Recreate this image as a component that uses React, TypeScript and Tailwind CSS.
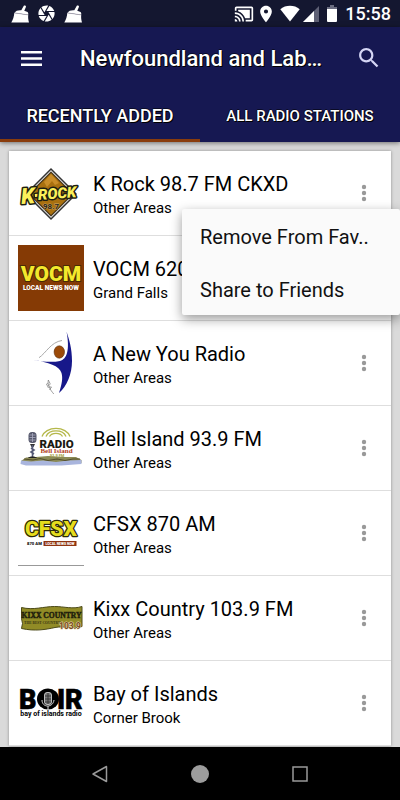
import React, { useState } from "react";

const outline =
  "[text-shadow:1px_1px_0_#000,-1px_0_0_#0008,0_-1px_0_#0008]";

function Broom() {
  return (
    <svg width="18" height="18" viewBox="0 0 18 18" fill="#fff">
      <path d="M12.800.7c.8-.8 2.600 0 2.100 1.300L13.300 5.800l2.600 1c1.200.5 1.600 1.500 1.300 2.900L3.500 7.700C4.800 5.700 7 5 10.300 5.200z" />
      <path d="M3.300 8.100l13.900 2c-.2 2.600 0 4.800.8 7.300H.3C2.100 15 3 11.600 3.300 8.100z" />
      <path d="M3.500 7.900l13.600 2" stroke="#a9a4b4" strokeWidth=".6" />
    </svg>
  );
}

function Aperture() {
  return (
    <svg width="17" height="17" viewBox="1.500 1.500 21 21" fill="#fff">
      <path d="M9.400 10.500l4.770-8.260C13.470 2.090 12.750 2 12 2c-2.400 0-4.600.85-6.320 2.250l3.660 6.350.060-.1zM21.540 9c-.92-2.920-3.150-5.260-6-6.340L11.880 9h9.660zm.26 1h-7.490l.29.500 4.760 8.250C21 16.970 22 14.610 22 12c0-.69-.07-1.350-.2-2zM8.540 12l-3.900-6.750C3.010 7.030 2 9.390 2 12c0 .69.070 1.350.2 2h7.490l-1.150-2zm-6.080 3c.92 2.920 3.150 5.260 6 6.340L12.120 15H2.460zm11.270 0l-3.900 6.760c.7.150 1.420.24 2.170.24 2.400 0 4.600-.85 6.320-2.250l-3.660-6.350-.93 1.600z" />
    </svg>
  );
}

function StatusBar() {
  return (
    <div className="flex h-[27px] items-center justify-between bg-[#141730] pr-[9px] pl-[11px]">
      <div className="flex items-center gap-[9px]">
        <Broom />
        <Aperture />
        <Broom />
      </div>
      <div className="flex items-center">
        <svg width="20" height="20" viewBox="0 0 24 24" fill="#fff">
          <path d="M1 18v3h3c0-1.660-1.340-3-3-3zm0-4v2c2.760 0 5 2.240 5 5h2c0-3.870-3.130-7-7-7zm18-7H5v1.630c3.960 1.280 7.090 4.410 8.370 8.370H19V7zM1 10v2c4.970 0 9 4.030 9 9h2c0-6.080-4.930-11-11-11zm20-7H3c-1.100 0-2 .9-2 2v3h2V5h18v14h-7v2h7c1.100 0 2-.9 2-2V5c0-1.100-.9-2-2-2z" />
        </svg>
        <svg className="ml-0.5" width="20" height="20" viewBox="0 0 24 24" fill="#fff">
          <path d="M12 2C8.130 2 5 5.130 5 9c0 5.250 7 13 7 13s7-7.750 7-13c0-3.870-3.130-7-7-7zm0 9.500a2.500 2.500 0 0 1 0-5 2.500 2.500 0 0 1 0 5z" />
        </svg>
        <svg className="ml-1" width="20" height="17" viewBox="0 0 20 17" fill="#fff">
          <path d="M10 16.500L.3 4.200C5.500-.3 14.500-.3 19.700 4.200z" />
        </svg>
        <svg className="ml-[3px]" width="16" height="16" viewBox="0 0 16 16">
          <path d="M16 0v16H0z" fill="#5e6075" />
          <path d="M11 5v11H0z" fill="#fff" />
        </svg>
        <svg className="ml-2" width="10" height="17" viewBox="0 0 10 17">
          <path d="M3 0h4v2h3v3H0V2h3z" fill="#6b6d80" />
          <path d="M0 4h10v12a1 1 0 0 1-1 1H1a1 1 0 0 1-1-1z" fill="#fff" />
        </svg>
        <span className="ml-2 text-[18px] leading-[27px] font-medium text-white">
          15:58
        </span>
      </div>
    </div>
  );
}

function KRockLogo() {
  return (
    <svg width="66" height="66" viewBox="0 0 66 66">
      <path d="M33 8l26 26-26 26L7 34z" fill="#333" />
      <path d="M33 10l24 24-24 24L9 34z" fill="#ddd" />
      <path d="M33 11.500l22.500 22.500L33 56.500 10.500 34z" fill="#3a2a10" />
      <path d="M33 13l21 21-21 21-21-21z" fill="#a9700f" />
      <path d="M33 14l8 9-4 2-3-4-5 6-3-5z" fill="#c98d28" />
      <g
        transform="rotate(-4 33 36)"
        fontFamily="Roboto"
        fontWeight="900"
        fontStyle="italic"
        fill="#fbf05a"
        stroke="#1d1d12"
        strokeWidth="3"
        strokeLinejoin="round"
        paintOrder="stroke"
      >
        <text x="3" y="42" fontSize="22">K</text>
        <path d="M17 33h4v3h-4z" />
        <text x="20" y="39" fontSize="15">ROCK</text>
      </g>
      <text x="25" y="49" fontFamily="Roboto" fontWeight="700" fontSize="8" fill="#2a2418" stroke="#c9a869" strokeWidth=".8" paintOrder="stroke">
        98.7
      </text>
    </svg>
  );
}

function VocmLogo() {
  return (
    <svg width="66" height="66" viewBox="0 0 66 66">
      <path d="M0 0h66v66H0z" fill="#853a05" />
      <text x="33" y="36" textAnchor="middle" fontFamily="Roboto" fontWeight="900" fontSize="21" fill="#f3e82c" stroke="#4a2a05" strokeWidth="2" paintOrder="stroke">
        VOCM
      </text>
      <text x="33" y="45" textAnchor="middle" fontFamily="Roboto" fontWeight="900" fontSize="6.500" fill="#fff">
        LOCAL NEWS NOW
      </text>
    </svg>
  );
}

function NewYouLogo() {
  return (
    <svg width="66" height="66" viewBox="0 0 66 66">
      <path d="M21 27.700C28 23 33 12 44 10.500" fill="none" stroke="#aaa" strokeWidth="1" />
      <path d="M48.500 1.500C51 9 54 18 54 31c0 13-5 25-13 32 3-9 4-15 2.500-20-2-7-13-11-28.500-13 11 2 20 2.500 27 1C49 29 52 20 48.500 1.500z" fill="#17188a" />
      <ellipse cx="41.300" cy="22" rx="5.200" ry="6.200" fill="#9b4a08" stroke="#5c3010" strokeWidth=".6" />
      <g fill="none" stroke="#777" strokeWidth=".7">
        <path d="M30.300 50c-1 5 2 10 5.500 14" />
        <path d="M30.300 50l2 4-2 2M30 53l-1.500 1 2 4M31 57l2.500 0-2 3" />
      </g>
    </svg>
  );
}

function BellIslandLogo() {
  return (
    <svg width="66" height="66" viewBox="0 0 66 66">
      <g fill="none" stroke="#b5b84a" strokeWidth="1.300">
        <path d="M24 21.500a14.500 11 0 0 1 28 0" />
        <path d="M28 21.500a10.500 8 0 0 1 20 0" />
        <path d="M31.500 21.500a7 5 0 0 1 13 0" />
      </g>
      <path d="M3 46l5-3.500 10-.5 12-1 16 1 12 0 5.500 3v3H3z" fill="#8b8a55" />
      <path d="M3 45.500l10 1 12-1 13 1.500 12-1.500 13.500-.5v4l-20 1.500H8L2.500 49z" fill="#a9b5dd" />
      <path d="M6 44l9 1 7-1.500 8 2 9-1.500 8 1.500 8-1.500 7 0" fill="none" stroke="#55502f" strokeWidth="1.200" />
      <rect x="10.500" y="17" width="8" height="11" rx="3.500" fill="#55586c" />
      <path d="M11.500 20h6M11.500 22.500h6M11.500 25h6M14.500 18v9" stroke="#a9abc0" strokeWidth=".8" />
      <path d="M12 29h5l-1.500 3h-2z" fill="#333" />
      <path d="M14.500 30v12M13 33l3 2-3 2 3 2" stroke="#555a78" strokeWidth="1.600" fill="none" />
      <path d="M10 43c1-2 8-2 9 0z" fill="#222" />
      <text x="38.500" y="32.500" textAnchor="middle" fontFamily="Roboto" fontWeight="900" fontSize="11.500" fill="#1a1a12">
        RADIO
      </text>
      <text x="38.500" y="38" textAnchor="middle" fontFamily="Liberation Serif" fontWeight="700" fontSize="7" fill="#b3401a">
        Bell Island
      </text>
      <text x="39" y="42" textAnchor="middle" fontFamily="Roboto" fontWeight="700" fontSize="4" fill="#a5a040">
        93.9 FM
      </text>
    </svg>
  );
}

function CfsxLogo() {
  return (
    <svg width="66" height="66" viewBox="0 0 66 66">
      <text x="33" y="36" textAnchor="middle" fontFamily="Roboto" fontWeight="900" fontSize="21" fill="#e6dc1e" stroke="#2c2a08" strokeWidth="2.500" strokeLinejoin="round" paintOrder="stroke">
        CFSX
      </text>
      <text x="9" y="45" fontFamily="Roboto" fontWeight="900" fontSize="4.200" fill="#111">
        870 AM
      </text>
      <path d="M25.500 41h33v5h-33z" fill="#8f3410" />
      <text x="42" y="45" textAnchor="middle" fontFamily="Roboto" fontWeight="900" fontSize="3.400" fill="#fff">
        LOCAL NEWS NOW
      </text>
      <path d="M0 65.500h66" stroke="#999" />
    </svg>
  );
}

function KixxLogo() {
  return (
    <svg width="66" height="66" viewBox="0 0 66 66">
      <path d="M3.500 22.500c12 3 22-1 33-1 10 0 18 3 27.500 0v20c-10 3-18-1-27 1-9 2-20 4-33.500 1l1-5-1-5z" fill="#918b26" stroke="#4c4a18" strokeWidth="1" />
      <text x="33.500" y="33" textAnchor="middle" fontFamily="Liberation Serif" fontWeight="700" fontSize="7.600" fill="#201d0c" stroke="#201d0c" strokeWidth=".4">
        KIXX COUNTRY
      </text>
      <text x="6" y="39" fontFamily="Liberation Serif" fontWeight="700" fontSize="3.600" fill="#3a3512">
        THE BEST COUNTRY
      </text>
      <text x="41" y="44" fontFamily="Roboto" fontWeight="700" fontSize="8.500" fill="#7a4a22" stroke="#e6d9b0" strokeWidth="1" paintOrder="stroke">
        103.9
      </text>
    </svg>
  );
}

function BoirLogo() {
  return (
    <svg width="66" height="66" viewBox="0 0 66 66">
      <g fontFamily="Roboto" fontWeight="900" fontSize="27" fill="#000" stroke="#000" strokeWidth=".6">
        <text x="1" y="39">B</text>
        <text x="39" y="39">I</text>
        <text x="47" y="39">R</text>
      </g>
      <ellipse cx="30" cy="29" rx="11" ry="10.500" fill="#000" />
      <rect x="26.500" y="22.500" width="7" height="12" rx="2.500" fill="#777" stroke="#ddd" strokeWidth=".8" />
      <path d="M27 26h6M27 29h6M27 32h6M30 23v11" stroke="#222" strokeWidth=".7" />
      <path d="M24 30c0 8 11 8 12 0M30 36v4" stroke="#ddd" strokeWidth="1" fill="none" />
      <text x="33" y="46" textAnchor="middle" fontFamily="Roboto" fontWeight="700" fontSize="7" fill="#000">
        bay of islands radio
      </text>
    </svg>
  );
}

const stations = [
  { name: "K Rock 98.7 FM CKXD", area: "Other Areas", Logo: KRockLogo },
  { name: "VOCM 620", area: "Grand Falls", Logo: VocmLogo },
  { name: "A New You Radio", area: "Other Areas", Logo: NewYouLogo },
  { name: "Bell Island 93.9 FM", area: "Other Areas", Logo: BellIslandLogo },
  { name: "CFSX 870 AM", area: "Other Areas", Logo: CfsxLogo },
  { name: "Kixx Country 103.9 FM", area: "Other Areas", Logo: KixxLogo },
  { name: "Bay of Islands", area: "Corner Brook", Logo: BoirLogo },
];

function StationMenu({ onClose }: { onClose: () => void }) {
  return (
    <div className="absolute top-[58px] right-[-9px] z-10 flex w-[218px] flex-col rounded-[2px] bg-[#fafafa] shadow-[0_4px_12px_rgba(0,0,0,0.4)]">
      {["Remove From Fav..", "Share to Friends"].map((label) => (
        <button
          key={label}
          className="h-[53px] px-[18px] pt-0.5 text-left text-[20px] text-[#111] hover:cursor-pointer"
          onClick={onClose}
        >
          {label}
        </button>
      ))}
    </div>
  );
}

export default function App() {
  const [tab, setTab] = useState(0);
  const [menuIndex, setMenuIndex] = useState(0);

  return (
    <div className="flex min-h-screen flex-col bg-[#dadada] font-[Roboto,sans-serif]">
      <StatusBar />
      <header className="relative bg-[#161852] text-white shadow-[0_1px_5px_rgba(0,0,0,0.5)]">
        <div className="flex h-[62px] items-center pr-5 pl-[21px]">
          <button aria-label="Menu" className="hover:cursor-pointer">
            <svg width="21" height="15" viewBox="0 0 21 15" fill="#fff">
              <path d="M0 0h21v2.500H0zM0 6.200h21v2.500H0zM0 12.400h21v2.500H0z" />
            </svg>
          </button>
          <h1 className={`ml-[38px] min-w-0 flex-1 truncate pt-0.5 text-[22px] leading-[30px] font-medium ${outline}`}>
            Newfoundland and Lab…
          </h1>
          <button aria-label="Search" className="hover:cursor-pointer">
            <svg width="22" height="22" viewBox="2 2 20 20" fill="#d5d6f5">
              <path d="M15.500 14h-.79l-.28-.27C15.410 12.590 16 11.110 16 9.500 16 5.910 13.090 3 9.500 3S3 5.910 3 9.500 5.910 16 9.500 16c1.610 0 3.090-.59 4.230-1.570l.27.28v.79l5 4.990L20.490 19l-4.990-5zm-6 0C7.010 14 5 11.990 5 9.500S7.010 5 9.500 5 14 7.010 14 9.500 11.990 14 9.500 14z" />
            </svg>
          </button>
        </div>
        <div className="flex">
          {["RECENTLY ADDED", "ALL RADIO STATIONS"].map((label, i) => (
            <button
              key={label}
              className={`h-[53px] flex-1 border-b-[3px] pt-1 leading-6 font-medium whitespace-nowrap hover:cursor-pointer ${outline} ${
                i === 0 ? "text-[18px]" : "text-[15px]"
              } ${tab === i ? "border-[#8a3c0c]" : "border-transparent"}`}
              onClick={() => setTab(i)}
            >
              {label}
            </button>
          ))}
        </div>
      </header>

      <main className="flex-1 px-[9px] pt-[9px]">
        <ul className="bg-white shadow-[0_0_3px_rgba(0,0,0,0.35)]">
          {stations.map(({ name, area, Logo }, i) => (
            <li
              key={name}
              className="relative flex h-[85px] items-center border-b border-[#dedede] pl-[9px]"
            >
              <Logo />
              <div className="ml-[9px] min-w-0 flex-1 pt-px text-black">
                <div className="truncate text-[20px] leading-[28px]">{name}</div>
                <div className="text-[15px] leading-[20px]">{area}</div>
              </div>
              <button
                aria-label={`Options for ${name}`}
                className="flex w-[54px] justify-center py-3 hover:cursor-pointer"
                onClick={() => setMenuIndex(i)}
              >
                <svg width="6" height="18" viewBox="0 0 6 18" fill="#999">
                  <circle cx="3" cy="3" r="2.200" />
                  <circle cx="3" cy="9" r="2.200" />
                  <circle cx="3" cy="15" r="2.200" />
                </svg>
              </button>
              {menuIndex === i && <StationMenu onClose={() => setMenuIndex(-1)} />}
            </li>
          ))}
        </ul>
      </main>

      <nav className="relative flex h-[53px] items-center justify-center gap-[76px] bg-black">
        <button aria-label="Back" className="hover:cursor-pointer">
          <svg width="24" height="20" viewBox="0 0 24 20" fill="none" stroke="#999" strokeWidth="1.500">
            <path d="M18.500 2.500v15L5 10z" strokeLinejoin="round" />
          </svg>
        </button>
        <button aria-label="Home" className="hover:cursor-pointer">
          <svg width="24" height="20" viewBox="0 0 24 20" fill="#9c9c9c">
            <circle cx="12" cy="10" r="9" />
          </svg>
        </button>
        <button aria-label="Recent apps" className="hover:cursor-pointer">
          <svg width="24" height="20" viewBox="0 0 24 20" fill="none" stroke="#999" strokeWidth="1.500">
            <path d="M5 3h14v14H5z" />
          </svg>
        </button>
      </nav>
    </div>
  );
}
